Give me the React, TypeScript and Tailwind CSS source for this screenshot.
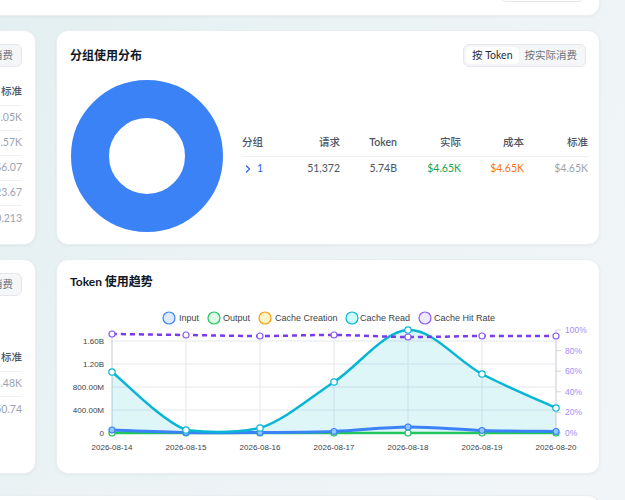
import { ChevronRight } from "lucide-react";

const FONT = "font-['Lato','Noto_Sans_CJK_SC',sans-serif]";

const XS = [42, 116, 190, 264, 338, 412, 486];
const DATES = ["2026-08-14", "2026-08-15", "2026-08-16", "2026-08-17", "2026-08-18", "2026-08-19", "2026-08-20"];
const cacheRead = [71, 129, 127, 81, 29, 73, 107];
const hitRate = [33, 34, 35, 34, 36, 35, 35];
const input = [129, 131.5, 131.5, 130.5, 126, 129.5, 130.5];
const output = [132, 132, 132, 132, 132, 132, 132];

type Pt = [number, number];

// catmull-rom -> bezier, control points kept above the x axis
function smooth(pts: Pt[]) {
  let d = `M${pts[0][0]},${pts[0][1]}`;
  for (let i = 0; i < pts.length - 1; i++) {
    const p0 = pts[i - 1] || pts[i];
    const p1 = pts[i];
    const p2 = pts[i + 1];
    const p3 = pts[i + 2] || p2;
    const c1x = p1[0] + (p2[0] - p0[0]) / 6;
    const c1y = Math.min(p1[1] + (p2[1] - p0[1]) / 6, 132);
    const c2x = p2[0] - (p3[0] - p1[0]) / 6;
    const c2y = Math.min(p2[1] - (p3[1] - p1[1]) / 6, 132);
    d += ` C${c1x},${c1y} ${c2x},${c2y} ${p2[0]},${p2[1]}`;
  }
  return d;
}

const pts = (ys: number[]): Pt[] => ys.map((y, i) => [XS[i], y]);

function Toggle() {
  return (
    <div className="flex h-[23px] items-center rounded-md border border-[#e5e7eb] bg-[#f5f6f8] p-[2px] text-[10.5px]">
      <div className="flex h-full items-center rounded bg-white px-[6px] text-[#1f2937] shadow-[0_0_1px_rgba(0,0,0,0.08)]">按 Token</div>
      <div className="flex h-full items-center px-[6px] text-[#6b7280]">按实际消费</div>
    </div>
  );
}

function TrendChart() {
  const legend = [
    { label: "Input", cx: 99, tx: 109, stroke: "#3b82f6", fill: "#dbeafe" },
    { label: "Output", cx: 144, tx: 153, stroke: "#22c55e", fill: "#dcfce7" },
    { label: "Cache Creation", cx: 195, tx: 205, stroke: "#f59e0b", fill: "#fef3c7" },
    { label: "Cache Read", cx: 282, tx: 290, stroke: "#06b6d4", fill: "#cffafe" },
    { label: "Cache Hit Rate", cx: 355, tx: 364, stroke: "#8b5cf6", fill: "#ede9fe" },
  ];
  const leftLabels: [string, number][] = [["1.60B", 40], ["1.20B", 63], ["800.00M", 86], ["400.00M", 109], ["0", 132]];
  const rightLabels: [string, number][] = [["100%", 29], ["80%", 49.6], ["60%", 70.2], ["40%", 90.8], ["20%", 111.4], ["0%", 132]];
  const readPath = smooth(pts(cacheRead));
  return (
    <svg width="518" height="160" viewBox="0 0 518 160" className="mt-[10px] block" fontFamily="'Liberation Sans', Arial, sans-serif">
      {legend.map(l => (
        <g key={l.label}>
          <circle cx={l.cx} cy={17} r={6} fill={l.fill} stroke={l.stroke} strokeWidth={1.2} />
          <text x={l.tx} y={20} fontSize={9} fill="#3f3f46">{l.label}</text>
        </g>
      ))}
      {[40, 63, 86, 109].map(y => (
        <line key={y} x1={42} x2={486} y1={y} y2={y} stroke="#e5e7eb" strokeWidth={1} />
      ))}
      {XS.map(x => (
        <line key={x} x1={x} x2={x} y1={29} y2={136} stroke="#e5e7eb" strokeWidth={1} />
      ))}
      <line x1={42} x2={42} y1={29} y2={132} stroke="#d1d5db" />
      <line x1={486} x2={486} y1={29} y2={132} stroke="#d1d5db" />
      <line x1={42} x2={486} y1={132} y2={132} stroke="#d1d5db" />
      {rightLabels.map(([, y]) => (
        <line key={y} x1={486} x2={491} y1={y} y2={y} stroke="#d1d5db" />
      ))}
      {leftLabels.map(([t, y]) => (
        <text key={t} x={34} y={y + 3} fontSize={8} fill="#3f3f46" textAnchor="end">{t}</text>
      ))}
      {rightLabels.map(([t, y]) => (
        <text key={t} x={495} y={y + 3} fontSize={8.5} fill="#a78bfa">{t}</text>
      ))}
      {DATES.map((d, i) => (
        <text key={d} x={XS[i]} y={149} fontSize={8} fill="#3f3f46" textAnchor="middle">{d}</text>
      ))}

      <path d={`${readPath} L486,132 L42,132 Z`} fill="#06b6d4" fillOpacity={0.13} />
      <path d={smooth(pts(output))} fill="none" stroke="#f59e0b" strokeWidth={2} />
      <path d={smooth(pts(output))} fill="none" stroke="#22c55e" strokeWidth={2.5} />
      <path d={smooth(pts(input))} fill="none" stroke="#3b82f6" strokeWidth={3} />
      <path d={readPath} fill="none" stroke="#06b6d4" strokeWidth={2.5} />
      <path d={smooth(pts(hitRate))} fill="none" stroke="#7c3aed" strokeWidth={2.5} strokeDasharray="5 4" />

      {XS.map((x, i) => (
        <g key={x}>
          <circle cx={x} cy={output[i]} r={3} fill="#fff" stroke="#22c55e" strokeWidth={1.2} />
          <circle cx={x} cy={input[i]} r={3} fill="#93c5fd" stroke="#3b82f6" strokeWidth={1.2} />
          <circle cx={x} cy={cacheRead[i]} r={3.2} fill="#fff" stroke="#06b6d4" strokeWidth={1.2} />
          <circle cx={x} cy={hitRate[i]} r={3} fill="#fff" stroke="#8b5cf6" strokeWidth={1.2} />
        </g>
      ))}
    </svg>
  );
}

function SideTable({ rows, gap }: { rows: string[]; gap: string }) {
  return (
    <div className="flex h-full w-full flex-col items-end pl-[14px] pr-[13px] pt-[13px]">
      <Toggle />
      <div className={`${gap} flex w-[200px] flex-col text-[10.5px]`}>
        <div className="flex h-[25px] justify-end border-b border-[#eef0f2] font-medium leading-[20px] text-[#4b5563]">标准</div>
        {rows.map((r, i) => (
          <div
            key={r}
            className={`flex h-[25px] items-center justify-end text-[#9ca3af] ${i < rows.length - 1 ? "border-b border-[#eef0f2]" : ""}`}
          >
            {r}
          </div>
        ))}
      </div>
    </div>
  );
}

const card = "rounded-xl bg-white border border-[#e9eef0] shadow-[0_1px_3px_rgba(15,23,42,0.05)]";

export default function App() {
  return (
    <div className={`${FONT} h-[500px] w-[625px] overflow-hidden bg-[linear-gradient(120deg,#e3eff0_0%,#ecf3f5_45%,#f2f5f8_100%)]`}>
      <div className="ml-[-264px] flex w-[864px] flex-col">
        {/* top card, mostly scrolled away */}
        <div className={`${card} mt-[-44px] flex h-[60px] items-end justify-end pb-[13px] pr-[15px]`}>
          <div className="h-[23px] w-[84px] rounded-md border border-[#e5e7eb] bg-white" />
        </div>

        <div className="mt-[14px] flex h-[215px] gap-[20px]">
          <div className={`${card} w-[300px]`}>
            <SideTable rows={["$3.05K", "$1.57K", "$6.07", "$23.67", "$0.213"]} gap="mt-[14px]" />
          </div>

          <div className={`${card} flex w-[544px] flex-col px-[13px] pt-[13px]`}>
            <div className="flex h-[23px] items-center justify-between">
              <div className="text-[12px] font-bold text-[#111827]">分组使用分布</div>
              <Toggle />
            </div>
            <div className="mt-[13px] flex items-center">
              <svg width="152" height="152" viewBox="0 0 152 152" className="ml-px shrink-0">
                <circle cx="76" cy="76" r="57" fill="none" stroke="#3b82f6" strokeWidth="38" />
              </svg>
              <div className="ml-[19px] flex flex-col text-[10.5px] text-[#4b5563]">
                <div className="grid h-[25px] grid-cols-[42px_56px_57px_64px_63px_64px] border-b border-[#eef0f2] font-medium leading-[20px]">
                  <span>分组</span>
                  <span className="text-right">请求</span>
                  <span className="text-right font-semibold">Token</span>
                  <span className="text-right">实际</span>
                  <span className="text-right">成本</span>
                  <span className="text-right">标准</span>
                </div>
                <div className="grid h-[23px] grid-cols-[42px_56px_57px_64px_63px_64px] items-center">
                  <span className="flex items-center gap-[3px] text-[#2563eb]">
                    <ChevronRight className="h-3 w-3" strokeWidth={2.5} />1
                  </span>
                  <span className="text-right">51,372</span>
                  <span className="text-right">5.74B</span>
                  <span className="text-right text-[#16a34a]">$4.65K</span>
                  <span className="text-right text-[#f97316]">$4.65K</span>
                  <span className="text-right text-[#9ca3af]">$4.65K</span>
                </div>
              </div>
            </div>
          </div>
        </div>

        <div className="mt-[14px] flex h-[215px] gap-[20px]">
          <div className={`${card} w-[300px]`}>
            <SideTable rows={["$4.48K", "$50.74"]} gap="mt-[51px]" />
          </div>

          <div className={`${card} flex w-[544px] flex-col px-[13px] pt-[13px]`}>
            <div className="h-[18px] text-[12px] font-bold leading-[18px] text-[#111827]">Token 使用趋势</div>
            <TrendChart />
          </div>
        </div>

        <div className={`${card} mt-[21px] h-[60px]`} />
      </div>
    </div>
  );
}
